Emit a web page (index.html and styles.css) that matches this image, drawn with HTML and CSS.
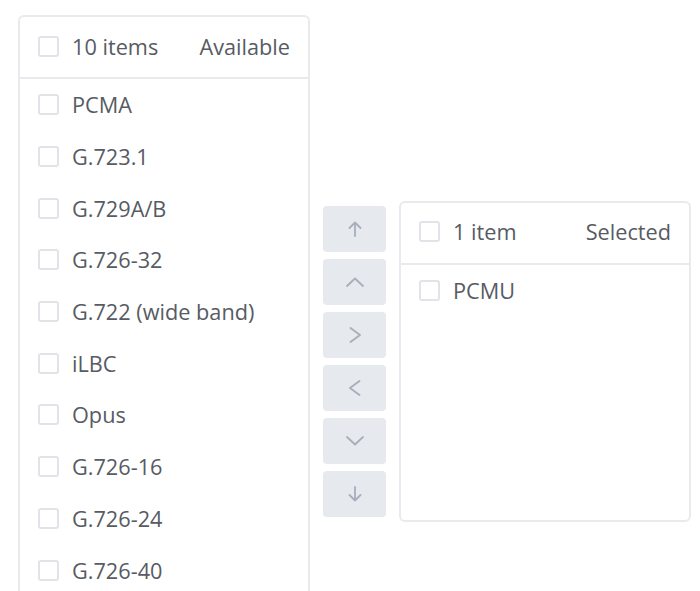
FILE: index.html
```html
<!DOCTYPE html>
<html lang="en">
<head>
<meta charset="utf-8">
<title>Transfer</title>
<link rel="stylesheet" href="styles.css">
</head>
<body>
<div class="transfer">
  <div class="panel panel-left">
    <div class="panel-header">
      <span class="checkbox"></span>
      <span class="count">10 items</span>
      <span class="title">Available</span>
    </div>
    <ul class="list">
      <li class="item"><span class="checkbox"></span><span class="label">PCMA</span></li>
      <li class="item"><span class="checkbox"></span><span class="label">G.723.1</span></li>
      <li class="item"><span class="checkbox"></span><span class="label">G.729A/B</span></li>
      <li class="item"><span class="checkbox"></span><span class="label">G.726-32</span></li>
      <li class="item"><span class="checkbox"></span><span class="label">G.722 (wide band)</span></li>
      <li class="item"><span class="checkbox"></span><span class="label">iLBC</span></li>
      <li class="item"><span class="checkbox"></span><span class="label">Opus</span></li>
      <li class="item"><span class="checkbox"></span><span class="label">G.726-16</span></li>
      <li class="item"><span class="checkbox"></span><span class="label">G.726-24</span></li>
      <li class="item"><span class="checkbox"></span><span class="label">G.726-40</span></li>
    </ul>
  </div>
  <div class="buttons">
    <button class="btn" type="button" aria-label="Move to top">
      <svg width="14" height="16" viewBox="0 0 14 16"><path d="M7 15V1.5M1.5 7L7 1.5L12.5 7" /></svg>
    </button>
    <button class="btn" type="button" aria-label="Move up">
      <svg width="18" height="10" viewBox="0 0 18 10"><path d="M1 9L9 1.5L17 9" /></svg>
    </button>
    <button class="btn" type="button" aria-label="Add">
      <svg width="12" height="16" viewBox="0 0 12 16"><path d="M1.5 1L11 8L1.5 15" /></svg>
    </button>
    <button class="btn" type="button" aria-label="Remove">
      <svg width="12" height="16" viewBox="0 0 12 16"><path d="M10.5 1L1 8L10.5 15" /></svg>
    </button>
    <button class="btn" type="button" aria-label="Move down">
      <svg width="18" height="10" viewBox="0 0 18 10"><path d="M1 1L9 8.5L17 1" /></svg>
    </button>
    <button class="btn" type="button" aria-label="Move to bottom">
      <svg width="14" height="16" viewBox="0 0 14 16"><path d="M7 1V14.5M1.5 9L7 14.5L12.5 9" /></svg>
    </button>
  </div>
  <div class="panel panel-right">
    <div class="panel-header">
      <span class="checkbox"></span>
      <span class="count">1 item</span>
      <span class="title">Selected</span>
    </div>
    <ul class="list">
      <li class="item"><span class="checkbox"></span><span class="label">PCMU</span></li>
    </ul>
  </div>
</div>
</body>
</html>
```
FILE: styles.css
```css
html, body {
  margin: 0;
  padding: 0;
  overflow: hidden;
  background: #ffffff;
}

body {
  font-family: "Open Sans", "Liberation Sans", sans-serif;
  color: #575b63;
}

.transfer {
  display: flex;
  align-items: center;
  padding: 15px 0 0 18px;
  gap: 13px;
}

.panel {
  box-sizing: border-box;
  width: 292px;
  border: 2px solid #e8eaee;
  border-radius: 6px;
  display: flex;
  flex-direction: column;
}

.panel-left {
  height: 692px;
}

.panel-right {
  height: 321px;
}

.panel-header {
  box-sizing: border-box;
  height: 62px;
  display: flex;
  align-items: center;
  padding: 0 18px 2px 18px;
  border-bottom: 2px solid #e8eaee;
  font-size: 21.7px;
}

.count {
  flex: 1;
}

.title {
  color: #575b63;
}

.checkbox {
  box-sizing: border-box;
  width: 21px;
  height: 21px;
  border: 2px solid #e1e3e8;
  border-radius: 3px;
  margin-right: 13px;
  flex: none;
  background: #fff;
}

.list {
  list-style: none;
  margin: 0;
  padding: 0;
}

.item {
  height: 51.7px;
  display: flex;
  align-items: center;
  padding: 0 18px;
  font-size: 21.7px;
}

.buttons {
  display: flex;
  flex-direction: column;
  gap: 7px;
}

.btn {
  width: 63px;
  height: 46px;
  border: none;
  border-radius: 4px;
  background: #e6e9ee;
  display: flex;
  align-items: center;
  justify-content: center;
  padding: 0;
}

.btn svg path {
  fill: none;
  stroke: #a6afba;
  stroke-width: 1.8;
  stroke-linecap: round;
  stroke-linejoin: round;
}
```
